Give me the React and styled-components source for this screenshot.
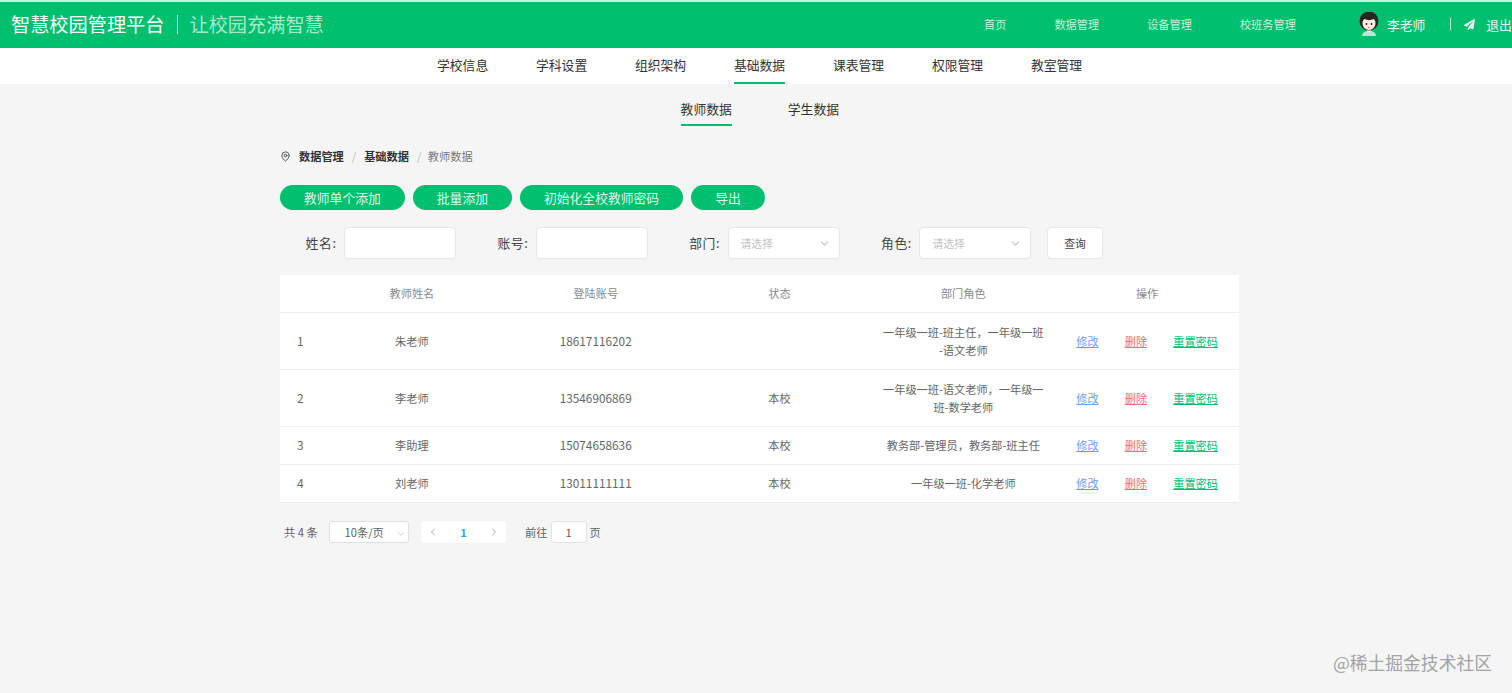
import React from 'react';
import styled, { createGlobalStyle } from 'styled-components';
import { MapPin, ChevronDown, ChevronLeft, ChevronRight } from 'lucide-react';
import { FaPaperPlane } from 'react-icons/fa';

const GlobalStyle = createGlobalStyle`
  html, body {
    margin: 0;
    padding: 0;
    height: 100%;
    overflow: hidden;
    background: #f5f5f5;
    font-family: "Noto Sans CJK SC", "Liberation Sans", sans-serif;
  }
  * {
    box-sizing: border-box;
  }
`;

const Page = styled.div`
  position: relative;
  width: 1512px;
  height: 693px;
  overflow: hidden;
  background: #f5f5f5;
`;

const Header = styled.header`
  height: 48px;
  border-top: 2px solid #c9eedd;
  background: #00bf6f;
  display: flex;
  align-items: center;
  padding: 0 0 2px 11px;
  white-space: nowrap;
`;

const Brand = styled.div`
  font-size: 19.2px;
  color: #fff;
  display: flex;
  align-items: center;
  flex: 0 0 973px;
  span {
    color: #a5ebcb;
  }
  i {
    width: 1px;
    height: 19px;
    margin: 0 12px;
    background: #b5eed4;
  }
`;

const TopNav = styled.nav`
  display: flex;
  gap: 48px;
  font-size: 11.2px;
  color: #c4f2dc;
`;

const User = styled.div`
  display: flex;
  align-items: center;
  margin-left: 62px;
  font-size: 12.8px;
  color: #e4f9ef;
  svg.avatar {
    width: 22px;
    height: 24px;
    margin-right: 7px;
  }
  i {
    width: 1px;
    height: 12px;
    margin: 0 13px 0 25px;
    background: #c4f2dc;
  }
  svg.send {
    width: 11px;
    height: 11px;
    margin-right: 11px;
    color: #e4f9ef;
  }
`;

const SubNav = styled.nav`
  height: 36px;
  background: #fff;
  display: flex;
  gap: 47.8px;
  padding-left: 437px;
`;

const SubNavItem = styled.a`
  height: 36px;
  line-height: 33px;
  font-size: 12.8px;
  color: #333;
  border-bottom: 2px solid ${p => (p.$active ? '#00bf6f' : 'transparent')};
`;

const Tabs = styled.div`
  display: flex;
  gap: 56px;
  padding: 8px 0 0 680.6px;
`;

const Tab = styled.a`
  height: 34px;
  line-height: 33px;
  font-size: 12.8px;
  color: #333;
  border-bottom: 2px solid ${p => (p.$active ? '#00bf6f' : 'transparent')};
`;

const Content = styled.main`
  width: 959px;
  margin-left: 280px;
`;

const Breadcrumb = styled.div`
  display: flex;
  align-items: center;
  height: 16px;
  margin-top: 22px;
  font-size: 11.2px;
  color: #777;
  svg {
    width: 11px;
    height: 11px;
    margin-right: 8px;
    color: #444;
  }
  b {
    font-weight: 700;
    color: #333;
  }
  em {
    font-style: normal;
    color: #bbb;
    margin: 0 8px;
  }
  em:last-of-type {
    margin-right: 6.5px;
  }
`;

const Actions = styled.div`
  display: flex;
  gap: 8px;
  margin-top: 21px;
`;

const PillButton = styled.button`
  height: 25px;
  padding: 0 24px;
  border: none;
  border-radius: 13px;
  background: #00bf6f;
  color: #dff8ec;
  font: 12.8px "Noto Sans CJK SC", sans-serif;
`;

const Filters = styled.div`
  display: flex;
  align-items: center;
  margin-top: 17px;
  padding-left: 25.6px;
`;

const Field = styled.label`
  display: flex;
  align-items: center;
  width: 191.8px;
  font-size: 12.8px;
  color: #444;
  span {
    width: 38.4px;
    flex: none;
    padding-bottom: 2px;
    letter-spacing: 0.6px;
  }
`;

const TextInput = styled.div`
  width: 112px;
  height: 32px;
  background: #fff;
  border: 1px solid #e6e6e6;
  border-radius: 4px;
`;

const SelectBox = styled(TextInput)`
  display: flex;
  align-items: center;
  justify-content: space-between;
  padding: 0 8px 0 12px;
  font-size: 10.8px;
  color: #c4c4c4;
  svg {
    width: 13px;
    height: 13px;
    color: #c0c4cc;
  }
`;

const QueryButton = styled.button`
  width: 56px;
  height: 32px;
  margin-left: -25.8px;
  background: #fff;
  border: 1px solid #e8e8e8;
  border-radius: 4px;
  color: #444;
  font: 10.8px "Noto Sans CJK SC", sans-serif;
`;

const Table = styled.table`
  width: 959px;
  margin-top: 16px;
  table-layout: fixed;
  border-collapse: collapse;
  background: #fff;
  font-size: 11.2px;
  color: #666;
  text-align: center;
  th {
    height: 37px;
    padding: 0 0 1px;
    font-weight: 400;
    color: #8a8a8a;
    border-bottom: 1px solid #ebeef5;
  }
  td {
    padding: 0 10px;
    line-height: 18px;
    border-bottom: 1px solid #ebeef5;
  }
  td:first-child {
    padding: 0 0 0 17px;
    text-align: left;
    font-size: 12px;
  }
  td.mono {
    font-size: 11.8px;
  }
`;

const Row = styled.tr`
  height: ${p => (p.$tall ? 57 : 38)}px;
`;

const OpsCell = styled.div`
  display: flex;
  justify-content: space-between;
  padding: 0 11px;
`;

const OpLink = styled.a`
  color: ${p => p.$color};
  text-decoration: underline;
`;

const Pagination = styled.div`
  display: flex;
  align-items: center;
  height: 22px;
  margin-top: 18px;
  padding-left: 4px;
  font-size: 11.2px;
  color: #606266;
`;

const PageSize = styled.div`
  width: 80px;
  height: 22px;
  margin: 0 12.5px 0 11px;
  padding: 0 2px 0 15px;
  display: flex;
  align-items: center;
  justify-content: space-between;
  border: 1px solid #dcdfe6;
  border-radius: 3px;
  background: #fff;
  svg {
    width: 10px;
    height: 10px;
    margin-top: 4px;
    color: #c0c4cc;
  }
`;

const Pager = styled.div`
  width: 85px;
  height: 22px;
  padding: 0 6px;
  display: flex;
  align-items: center;
  justify-content: space-between;
  background: #fff;
  border-radius: 2px;
  b {
    color: #409eff;
    font-weight: 700;
  }
  svg {
    width: 12px;
    height: 12px;
    color: #a8abb2;
  }
`;

const JumpLabel = styled.span`
  margin-left: ${p => p.$left || 0}px;
`;

const JumpInput = styled.div`
  width: 36px;
  height: 22px;
  margin: 0 3px;
  line-height: 20px;
  text-align: center;
  background: #fff;
  border: 1px solid #e2e2e2;
  border-radius: 3px;
`;

const Watermark = styled.div`
  position: absolute;
  right: 20px;
  bottom: 19px;
  font-size: 17.8px;
  line-height: 24px;
  color: #a3a3a3;
`;

const Avatar = () => (
  <svg className="avatar" viewBox="0 0 22 24">
    <path d="M4 24c0-3.500 3-5 7-5s7 1.500 7 5z" fill="#b9e6d2" />
    <rect x="9" y="16" width="4" height="4" fill="#fde9e2" />
    <circle cx="11" cy="9" r="9.500" fill="#2a2522" />
    <path d="M4.500 11c0-2 1-3.500 2-4 3 1.500 6.500 1.500 9 0 1 .5 2 2 2 4 0 4-3 7-6.500 7s-6.500-3-6.500-7z" fill="#fde9e2" />
    <circle cx="8.500" cy="12" r=".9" fill="#222" />
    <circle cx="13.500" cy="12" r=".9" fill="#222" />
    <path d="M10 15.500h2" stroke="#d77" strokeWidth=".9" />
  </svg>
);

const subNavItems = ['学校信息', '学科设置', '组织架构', '基础数据', '课表管理', '权限管理', '教室管理'];

// \u200b lets the first role wrap in front of its hyphen
const teachers = [
  { name: '朱老师', account: '18617116202', status: '', role: '一年级一班-班主任，一年级一班\u200b-语文老师' },
  { name: '李老师', account: '13546906869', status: '本校', role: '一年级一班-语文老师，一年级一班-数学老师' },
  { name: '李助理', account: '15074658636', status: '本校', role: '教务部-管理员，教务部-班主任' },
  { name: '刘老师', account: '13011111111', status: '本校', role: '一年级一班-化学老师' },
];

export default function App() {
  return (
    <Page>
      <GlobalStyle />
      <Header>
        <Brand>
          智慧校园管理平台<i /><span>让校园充满智慧</span>
        </Brand>
        <TopNav>
          <a>首页</a>
          <a>数据管理</a>
          <a>设备管理</a>
          <a>校班务管理</a>
        </TopNav>
        <User>
          <Avatar />
          李老师
          <i />
          <FaPaperPlane className="send" />
          退出
        </User>
      </Header>

      <SubNav>
        {subNavItems.map(item => (
          <SubNavItem key={item} $active={item === '基础数据'}>{item}</SubNavItem>
        ))}
      </SubNav>

      <Tabs>
        <Tab $active>教师数据</Tab>
        <Tab>学生数据</Tab>
      </Tabs>

      <Content>
        <Breadcrumb>
          <MapPin />
          <b>数据管理</b><em>/</em><b>基础数据</b><em>/</em>教师数据
        </Breadcrumb>

        <Actions>
          <PillButton>教师单个添加</PillButton>
          <PillButton>批量添加</PillButton>
          <PillButton>初始化全校教师密码</PillButton>
          <PillButton>导出</PillButton>
        </Actions>

        <Filters>
          <Field><span>姓名:</span><TextInput /></Field>
          <Field><span>账号:</span><TextInput /></Field>
          <Field><span>部门:</span><SelectBox>请选择<ChevronDown /></SelectBox></Field>
          <Field><span>角色:</span><SelectBox>请选择<ChevronDown /></SelectBox></Field>
          <QueryButton>查询</QueryButton>
        </Filters>

        <Table>
          <colgroup>
            <col width="40" />
          </colgroup>
          <thead>
            <tr>
              <th />
              <th>教师姓名</th>
              <th>登陆账号</th>
              <th>状态</th>
              <th>部门角色</th>
              <th>操作</th>
            </tr>
          </thead>
          <tbody>
            {teachers.map((t, i) => (
              <Row key={t.account} $tall={t.role.length > 15}>
                <td>{i + 1}</td>
                <td>{t.name}</td>
                <td className="mono">{t.account}</td>
                <td>{t.status}</td>
                <td>{t.role}</td>
                <td>
                  <OpsCell>
                    <OpLink $color="#6f9df5">修改</OpLink>
                    <OpLink $color="#ee6b7b">删除</OpLink>
                    <OpLink $color="#00bf6f">重置密码</OpLink>
                  </OpsCell>
                </td>
              </Row>
            ))}
          </tbody>
        </Table>

        <Pagination>
          共 4 条
          <PageSize>10条/页<ChevronDown /></PageSize>
          <Pager><ChevronLeft /><b>1</b><ChevronRight /></Pager>
          <JumpLabel $left={19}>前往</JumpLabel>
          <JumpInput>1</JumpInput>
          页
        </Pagination>
      </Content>

      <Watermark>@稀土掘金技术社区</Watermark>
    </Page>
  );
}
